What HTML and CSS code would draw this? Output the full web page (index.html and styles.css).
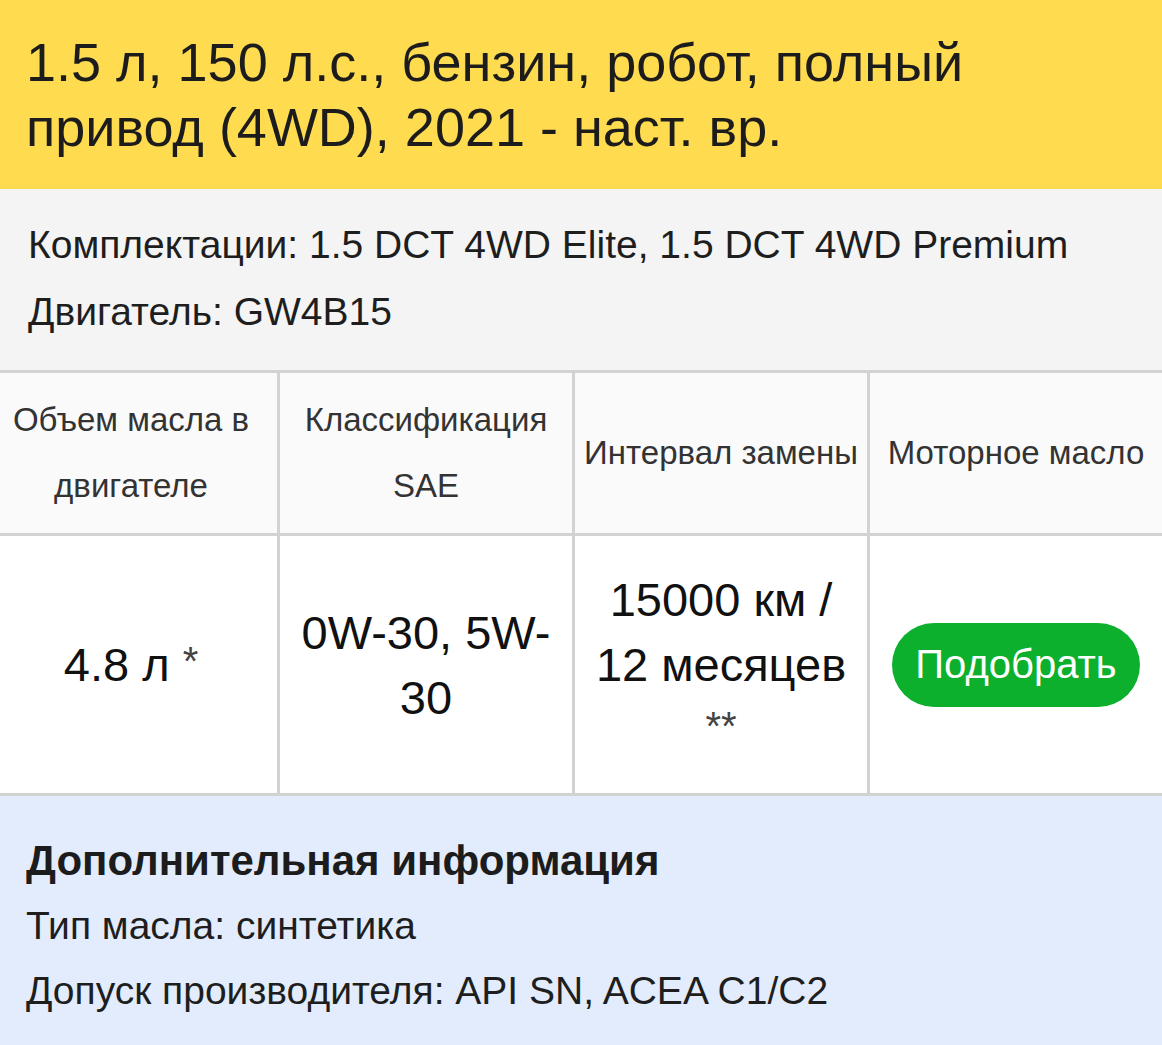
FILE: index.html
```html
<!DOCTYPE html>
<html lang="ru">
<head>
<meta charset="utf-8">
<title>Моторное масло</title>
<link rel="stylesheet" href="styles.css">
</head>
<body>
<div class="page">
  <h1 class="title">1.5 л, 150 л.с., бензин, робот, полный привод (4WD), 2021 - наст. вр.</h1>
  <div class="meta">
    <p class="meta-line">Комплектации: 1.5 DCT 4WD Elite, 1.5 DCT 4WD Premium</p>
    <p class="meta-line">Двигатель: GW4B15</p>
  </div>
  <div class="table">
    <div class="th first"><div class="cell-text">Объем масла в двигателе</div></div>
    <div class="th"><div class="cell-text">Классификация SAE</div></div>
    <div class="th"><div class="cell-text">Интервал замены</div></div>
    <div class="th"><div class="cell-text">Моторное масло</div></div>
    <div class="td first"><div class="cell-text">4.8 л <span class="note">*</span></div></div>
    <div class="td"><div class="cell-text">0W-30, 5W-30</div></div>
    <div class="td"><div class="cell-text">15000 км / 12 месяцев <span class="note">**</span></div></div>
    <div class="td"><button class="btn" type="button">Подобрать</button></div>
  </div>
  <div class="info">
    <h2 class="info-title">Дополнительная информация</h2>
    <p class="info-line">Тип масла: синтетика</p>
    <p class="info-line">Допуск производителя: API SN, ACEA C1/C2</p>
  </div>
</div>
</body>
</html>
```
FILE: styles.css
```css
html, body {
  margin: 0;
  padding: 0;
  background: #e2ecfc;
}
body {
  font-family: "Liberation Sans", Arial, Helvetica, sans-serif;
  color: #1a1a1a;
}
.page {
  width: 1162px;
}
.title {
  margin: 0;
  background: #ffdb4f;
  padding: 30px 26px 29px;
  font-size: 54px;
  line-height: 65px;
  font-weight: normal;
  color: #1c1c1c;
}
.meta {
  background: #f4f4f4;
  padding: 22px 28px 25px;
}
.meta-line {
  margin: 0;
  font-size: 39px;
  line-height: 67px;
  color: #1e1e1e;
}
.table {
  display: grid;
  grid-template-columns: 277px 292px 292px 292px;
  grid-template-rows: 160px 257px;
  gap: 3px;
  padding: 3px 0;
  background: #d2d2d2;
}
.th {
  background: #fafafa;
  display: flex;
  align-items: center;
  justify-content: center;
  text-align: center;
  padding: 0 4px;
  font-size: 33px;
  line-height: 66px;
  color: #333;
}
.td {
  background: #fff;
  display: flex;
  align-items: center;
  justify-content: center;
  text-align: center;
  padding: 0 10px;
  font-size: 47px;
  line-height: 65px;
  color: #111;
}
.th.first,
.td.first {
  padding-left: 0;
  padding-right: 15px;
}
.cell-text {
  width: 100%;
}
.note {
  font-size: 40px;
  line-height: 50px;
  color: #444;
  vertical-align: 6px;
}
.btn {
  width: 248px;
  height: 84px;
  border: 0;
  border-radius: 42px;
  background: #0cb02d;
  color: #fff;
  font-family: "Liberation Sans", Arial, Helvetica, sans-serif;
  font-size: 40px;
  padding: 0;
  cursor: pointer;
}
.info {
  background: #e2ecfc;
  padding: 32px 26px 22px;
}
.info-title {
  margin: 0;
  font-size: 42px;
  line-height: 65px;
  font-weight: bold;
  color: #1c1c1c;
}
.info-line {
  margin: 0;
  font-size: 39px;
  line-height: 65px;
  color: #1e1e1e;
}
```
